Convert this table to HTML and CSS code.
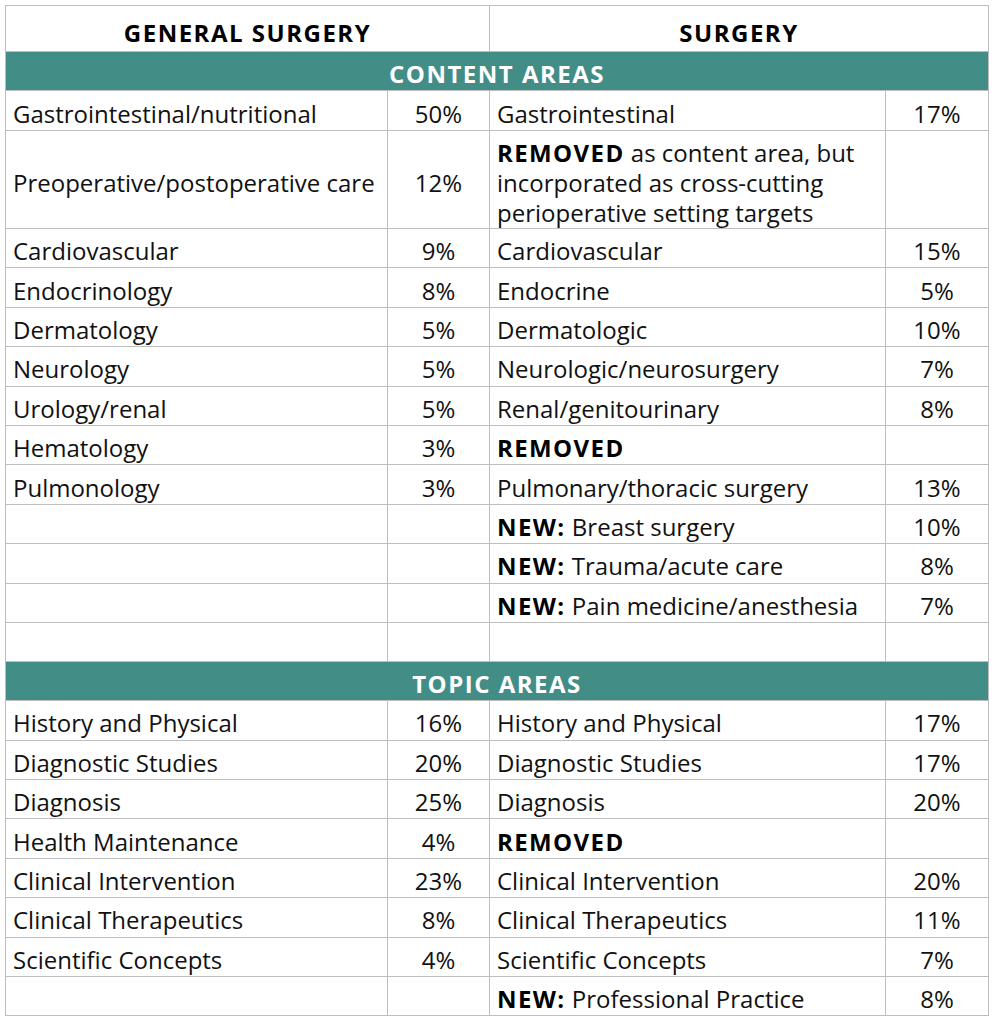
FILE: index.html
```html
<!DOCTYPE html>
<html lang="en">
<head>
<meta charset="utf-8">
<title>General Surgery vs Surgery</title>
<link rel="stylesheet" href="styles.css">
</head>
<body>
<table class="blueprint">
  <colgroup>
    <col class="c-name">
    <col class="c-pct">
    <col class="c-name2">
    <col class="c-pct2">
  </colgroup>
  <thead>
    <tr class="head-row">
      <th colspan="2">GENERAL SURGERY</th>
      <th colspan="2">SURGERY</th>
    </tr>
  </thead>
  <tbody>
    <tr class="band"><td colspan="4">CONTENT AREAS</td></tr>
    <tr class="first"><td>Gastrointestinal/nutritional</td><td class="pct">50%</td><td>Gastrointestinal</td><td class="pct">17%</td></tr>
    <tr class="tall"><td>Preoperative/postoperative care</td><td class="pct">12%</td><td class="multi"><b>REMOVED</b> as content area, but incorporated as cross-cutting perioperative setting targets</td><td class="pct"></td></tr>
    <tr><td>Cardiovascular</td><td class="pct">9%</td><td>Cardiovascular</td><td class="pct">15%</td></tr>
    <tr><td>Endocrinology</td><td class="pct">8%</td><td>Endocrine</td><td class="pct">5%</td></tr>
    <tr><td>Dermatology</td><td class="pct">5%</td><td>Dermatologic</td><td class="pct">10%</td></tr>
    <tr><td>Neurology</td><td class="pct">5%</td><td>Neurologic/neurosurgery</td><td class="pct">7%</td></tr>
    <tr><td>Urology/renal</td><td class="pct">5%</td><td>Renal/genitourinary</td><td class="pct">8%</td></tr>
    <tr><td>Hematology</td><td class="pct">3%</td><td><b>REMOVED</b></td><td class="pct"></td></tr>
    <tr><td>Pulmonology</td><td class="pct">3%</td><td>Pulmonary/thoracic surgery</td><td class="pct">13%</td></tr>
    <tr><td></td><td class="pct"></td><td><b>NEW:</b> Breast surgery</td><td class="pct">10%</td></tr>
    <tr><td></td><td class="pct"></td><td><b>NEW:</b> Trauma/acute care</td><td class="pct">8%</td></tr>
    <tr><td></td><td class="pct"></td><td><b>NEW:</b> Pain medicine/anesthesia</td><td class="pct">7%</td></tr>
    <tr><td></td><td class="pct"></td><td></td><td class="pct"></td></tr>
    <tr class="band"><td colspan="4">TOPIC AREAS</td></tr>
    <tr><td>History and Physical</td><td class="pct">16%</td><td>History and Physical</td><td class="pct">17%</td></tr>
    <tr><td>Diagnostic Studies</td><td class="pct">20%</td><td>Diagnostic Studies</td><td class="pct">17%</td></tr>
    <tr><td>Diagnosis</td><td class="pct">25%</td><td>Diagnosis</td><td class="pct">20%</td></tr>
    <tr><td>Health Maintenance</td><td class="pct">4%</td><td><b>REMOVED</b></td><td class="pct"></td></tr>
    <tr><td>Clinical Intervention</td><td class="pct">23%</td><td>Clinical Intervention</td><td class="pct">20%</td></tr>
    <tr><td>Clinical Therapeutics</td><td class="pct">8%</td><td>Clinical Therapeutics</td><td class="pct">11%</td></tr>
    <tr><td>Scientific Concepts</td><td class="pct">4%</td><td>Scientific Concepts</td><td class="pct">7%</td></tr>
    <tr><td></td><td class="pct"></td><td><b>NEW:</b> Professional Practice</td><td class="pct">8%</td></tr>
  </tbody>
</table>
</body>
</html>
```
FILE: styles.css
```css
html, body {
  background: #ffffff;
}
body {
  margin: 5px;
  font-family: "Open Sans", "Lato", "Liberation Sans", sans-serif;
  color: #111111;
}
.blueprint {
  border-collapse: collapse;
  table-layout: fixed;
  width: 983px;
  font-size: 24px;
}
.c-name { width: 382px; }
.c-pct { width: 102px; }
.c-name2 { width: 396px; }
.c-pct2 { width: 103px; }

.blueprint th,
.blueprint td {
  border: 1px solid #bdbdbd;
  padding: 6px 7px 0;
  height: 32.4px;
  line-height: 30px;
  vertical-align: middle;
  text-align: left;
  font-weight: 400;
}
.blueprint b {
  font-weight: 700;
  letter-spacing: 1.4px;
  color: #000000;
}
.head-row th {
  height: 36px;
  padding-top: 9px;
  text-align: center;
  font-weight: 700;
  font-size: 24px;
  letter-spacing: 1.5px;
  color: #000000;
}
.band td {
  background: #438d87;
  color: #ffffff;
  font-weight: 700;
  letter-spacing: 1.5px;
  text-align: center;
  height: 32px;
}
.first td { height: 33px; }
.tall td { height: 91px; }
.blueprint td.pct {
  text-align: center;
}
.multi {
  line-height: 30px;
}
```
